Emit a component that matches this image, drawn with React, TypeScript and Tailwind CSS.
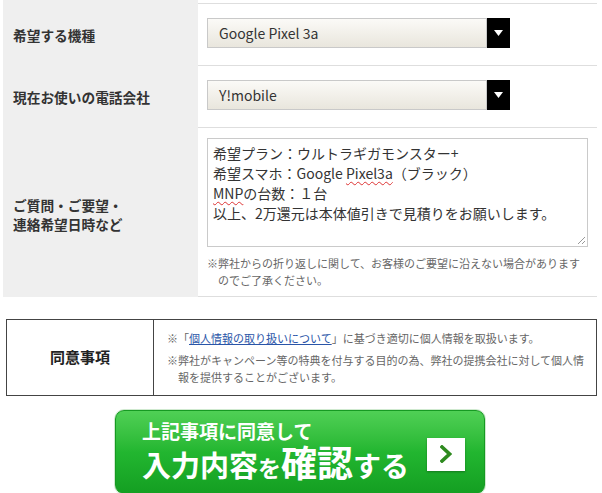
import type { ReactNode } from "react";

// Inquiry form tail: three label/field rows on a grey label column,
// the consent box and the green confirm button.

const jp = "font-['Noto_Sans_CJK_JP','Noto_Sans',sans-serif]";

function SelectBox({ value }: { value: string }) {
  return (
    <div className="flex h-[30px] w-[303px]">
      <div className="flex flex-1 items-center border border-[#c9c9c9] bg-linear-to-b from-[#fbfaf7] to-[#e9e6dd] pl-[11px] text-[14px] text-[#333]">
        {value}
      </div>
      <div className="flex w-[23px] items-center justify-center bg-black">
        <svg width="9" height="6" viewBox="0 0 9 6">
          <path d="M0 0h9L4.5 6z" fill="#fff" />
        </svg>
      </div>
    </div>
  );
}

function Row({
  label,
  children,
  className,
}: {
  label: ReactNode;
  children: ReactNode;
  className: string;
}) {
  return (
    <div className="flex">
      <div className="flex w-[195px] items-center bg-[#efefef] pl-[10px] text-[13.7px] leading-[19px] font-bold text-[#333]">
        {label}
      </div>
      <div className={`flex-1 border-b border-[#dedede] pl-[9px] ${className}`}>
        {children}
      </div>
    </div>
  );
}

export default function App() {
  return (
    <div className={`${jp} min-h-[493px] bg-white text-[#333]`}>
      <div className="ml-[3px] mr-[5px]">
        <div className="flex h-[4px]">
          <div className="w-[195px] bg-[#efefef]" />
          <div className="flex-1 border-b border-[#dedede]" />
        </div>
        <Row label="希望する機種" className="pt-[14px] pb-[17px]">
          <SelectBox value="Google Pixel 3a" />
        </Row>
        <Row label="現在お使いの電話会社" className="pt-[14px] pb-[17px]">
          <SelectBox value="Y!mobile" />
        </Row>
        <Row
          label={
            <span className="pt-[4px]">
              ご質問・ご要望・
              <br />
              連絡希望日時など
            </span>
          }
          className="pt-[10px] pb-[7px]"
        >
          <div className="relative h-[109px] w-[381px] border border-[#cacaca] px-[5px] pt-[4px] text-[14px] leading-[20px] text-[#333]">
            <div>希望プラン：ウルトラギガモンスター+</div>
            <div>
              希望スマホ：Google{" "}
              <span className="underline decoration-[#d33] decoration-wavy decoration-1 underline-offset-2">
                Pixel3a
              </span>
              （ブラック）
            </div>
            <div>
              <span className="underline decoration-[#d33] decoration-wavy decoration-1 underline-offset-2">
                MNP
              </span>
              の台数：１台
            </div>
            <div>以上、2万還元は本体値引きで見積りをお願いします。</div>
            <svg
              className="absolute right-[1px] bottom-[1px]"
              width="10"
              height="10"
              viewBox="0 0 10 10"
            >
              <path d="M9 2L2 9M9 6L6 9" stroke="#999" strokeWidth="1" />
            </svg>
          </div>
          <p className="mt-[8px] w-[381px] pl-[11px] -indent-[11px] text-[11px] leading-[17px] text-[#666]">
            ※弊社からの折り返しに関して、お客様のご要望に沿えない場合がありますのでご了承ください。
          </p>
        </Row>
      </div>

      <div className="mt-[22px] ml-[6px] flex w-[591px] border border-[#444]">
        <div className="flex w-[147px] items-center justify-center border-r border-[#444] text-[15px] font-bold text-[#222]">
          同意事項
        </div>
        <div className="flex-1 pt-[10px] pr-[8px] pb-[9px] pl-[13px] text-[11px] leading-[17px] text-[#666]">
          <p>
            ※「
            <a href="#" className="text-[#2a55a8] underline">
              個人情報の取り扱いについて
            </a>
            」に基づき適切に個人情報を取扱います。
          </p>
          <p className="mt-[5px] pl-[11px] -indent-[11px]">
            ※弊社がキャンペーン等の特典を付与する目的の為、弊社の提携会社に対して個人情報を提供することがございます。
          </p>
        </div>
      </div>

      <div className="mt-[14px] ml-[115px] flex h-[84px] w-[370px] items-center rounded-[9px] border border-[#169a22] bg-linear-to-b from-[#4fd055] via-[#22b630] to-[#149f22] pl-[26px] text-white shadow-[0_0_0_1px_#cfe9cf]">
        <div className="flex flex-col font-bold">
          <span className="-mt-[1px] text-[19px] leading-[24px]">上記事項に同意して</span>
          <span className="flex items-baseline leading-[36px]">
            <span className="text-[29px]">入力内容</span>
            <span className="text-[23px]">を</span>
            <span className="text-[36px]">確認</span>
            <span className="text-[28px]">する</span>
          </span>
        </div>
        <div className="mt-[4px] ml-auto mr-[19px] flex h-[33px] w-[38px] items-center justify-center bg-white shadow-[0_1px_2px_rgba(0,0,0,0.3)]">
          <svg width="12" height="18" viewBox="0 0 12 18">
            <path
              d="M2 2l7.5 7L2 16"
              fill="none"
              stroke="#2e8a1f"
              strokeWidth="3.6"
              strokeLinecap="square"
            />
          </svg>
        </div>
      </div>
    </div>
  );
}
